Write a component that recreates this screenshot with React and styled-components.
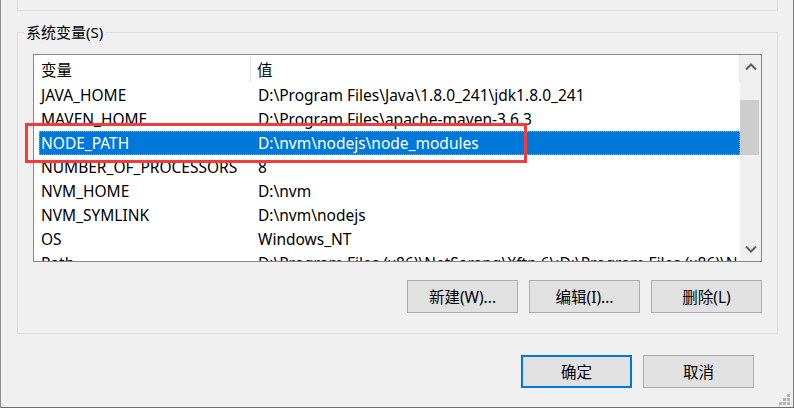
import React from "react";
import styled, { createGlobalStyle } from "styled-components";

const GlobalStyle = createGlobalStyle`
  html, body {
    margin: 0;
    padding: 0;
    background: #f0f0f0;
  }
  * {
    box-sizing: border-box;
  }
`;

const FONT = `"Noto Sans", "Noto Sans CJK SC", sans-serif`;

const rows = [
  { name: "JAVA_HOME", value: "D:\\Program Files\\Java\\1.8.0_241\\jdk1.8.0_241" },
  { name: "MAVEN_HOME", value: "D:\\Program Files\\apache-maven-3.6.3" },
  { name: "NODE_PATH", value: "D:\\nvm\\nodejs\\node_modules", selected: true },
  { name: "NUMBER_OF_PROCESSORS", value: "8" },
  { name: "NVM_HOME", value: "D:\\nvm" },
  { name: "NVM_SYMLINK", value: "D:\\nvm\\nodejs" },
  { name: "OS", value: "Windows_NT" },
  {
    name: "Path",
    value:
      "D:\\Program Files (x86)\\NetSarang\\Xftp 6\\;D:\\Program Files (x86)\\NetSarang\\Xshell 6\\",
  },
];

const Chevron = ({ down }) => (
  <svg width="12" height="8" viewBox="0 0 12 8">
    <polyline
      points={down ? "1,1.5 6,6.5 11,1.5" : "1,6.5 6,1.5 11,6.5"}
      fill="none"
      stroke="#606060"
      strokeWidth="2"
    />
  </svg>
);

const Grip = () => (
  <GripBox width="12" height="12" viewBox="0 0 12 12">
    <rect x="8" y="0" width="3" height="3" fill="#b4b4b4" />
    <rect x="4" y="4" width="3" height="3" fill="#b4b4b4" />
    <rect x="8" y="4" width="3" height="3" fill="#b4b4b4" />
    <rect x="0" y="8" width="3" height="3" fill="#b4b4b4" />
    <rect x="4" y="8" width="3" height="3" fill="#b4b4b4" />
    <rect x="8" y="8" width="3" height="3" fill="#b4b4b4" />
  </GripBox>
);

const App = () => {
  return (
    <>
      <GlobalStyle />
      <Window>
        <TopGroup />
        <GroupBox>
          <Legend>系统变量(S)</Legend>
          <ListView>
            <ListBody>
              <Header>
                <HeaderCell className="first">变量</HeaderCell>
                <HeaderCell>值</HeaderCell>
              </Header>
              {rows.map((r) => (
                <Row key={r.name} selected={r.selected}>
                  <NameCell>{r.name}</NameCell>
                  <ValueCell>{r.value}</ValueCell>
                </Row>
              ))}
            </ListBody>
            <ScrollBar>
              <ArrowButton>
                <Chevron />
              </ArrowButton>
              <Track>
                <Thumb />
              </Track>
              <ArrowButton>
                <Chevron down />
              </ArrowButton>
            </ScrollBar>
            <Highlight />
          </ListView>
          <ButtonRow>
            <Button>新建(W)...</Button>
            <Button>编辑(I)...</Button>
            <Button>删除(L)</Button>
          </ButtonRow>
        </GroupBox>
        <Footer>
          <Button primary>确定</Button>
          <Button>取消</Button>
        </Footer>
        <Grip />
      </Window>
    </>
  );
};

const Window = styled.div`
  position: relative;
  width: 794px;
  height: 408px;
  display: flex;
  flex-direction: column;
  padding: 0 15px 0 16px;
  background: #f0f0f0;
  border-left: 1px solid #8c8c8c;
  border-right: 1px solid #7a7a7a;
  border-bottom: 1px solid #6e6e6e;
  font-family: ${FONT};
  font-size: 15.5px;
  color: #000;
`;

const TopGroup = styled.div`
  height: 11px;
  border: 1px solid #dcdcdc;
  border-top: none;
`;

const GroupBox = styled.fieldset`
  margin: 11px 0 0;
  padding: 0 15px 20px;
  border: 1px solid #dcdcdc;
  min-width: 0;
`;

const Legend = styled.legend`
  margin-left: -9px;
  padding: 0 2px;
  line-height: 20px;
  font-size: 15px;
`;

const ListView = styled.div`
  position: relative;
  margin-top: 12px;
  height: 208px;
  display: flex;
  background: #fff;
  border: 1px solid #828790;
`;

const ListBody = styled.div`
  flex: 1;
  overflow: hidden;
  white-space: nowrap;
`;

const Header = styled.div`
  display: flex;
  height: 28px;
  border-right: 1px solid #e5e5e5;
`;

const HeaderCell = styled.div`
  display: flex;
  align-items: center;
  padding: 1px 0 0 6px;
  margin: 2px 0 1px;
  line-height: 20px;
  &.first {
    width: 217px;
    padding-left: 7px;
    border-right: 1px solid #e5e5e5;
  }
`;

const Row = styled.div`
  display: flex;
  align-items: center;
  height: 24px;
  margin-left: 5px;
  line-height: 20px;
  background: ${(p) => (p.selected ? "#0078d7" : "transparent")};
  color: ${(p) => (p.selected ? "#fff" : "#000")};
  outline: ${(p) => (p.selected ? "1px dotted #e0963c" : "none")};
  outline-offset: -1px;
`;

const NameCell = styled.div`
  width: 219px;
  padding-left: 2px;
  flex-shrink: 0;
`;

const ValueCell = styled.div`
  flex: 1;
  overflow: hidden;
`;

const ScrollBar = styled.div`
  width: 21px;
  display: flex;
  flex-direction: column;
  background: #f0f0f0;
`;

const ArrowButton = styled.div`
  height: 24px;
  display: flex;
  align-items: center;
  justify-content: center;
`;

const Track = styled.div`
  flex: 1;
`;

const Thumb = styled.div`
  margin: 21px 2px 0 0;
  height: 55px;
  background: #cdcdcd;
`;

const Highlight = styled.div`
  position: absolute;
  left: -9px;
  top: 68px;
  width: 502px;
  height: 40px;
  border: 3px solid #f23b3b;
  pointer-events: none;
`;

const ButtonRow = styled.div`
  display: flex;
  justify-content: flex-end;
  gap: 11px;
  margin-top: 18px;
`;

const Button = styled.button`
  width: 111px;
  height: 33px;
  padding: 0;
  background: #e1e1e1;
  border: ${(p) => (p.primary ? "2px solid #0078d7" : "1px solid #adadad")};
  font-family: ${FONT};
  font-size: 15.5px;
  color: #000;
  display: flex;
  align-items: center;
  justify-content: center;
`;

const Footer = styled.div`
  display: flex;
  justify-content: flex-end;
  gap: 11px;
  margin-top: 21px;
  padding-right: 24px;
`;

const GripBox = styled.svg`
  position: absolute;
  right: 2px;
  bottom: 1px;
`;

export default App;
